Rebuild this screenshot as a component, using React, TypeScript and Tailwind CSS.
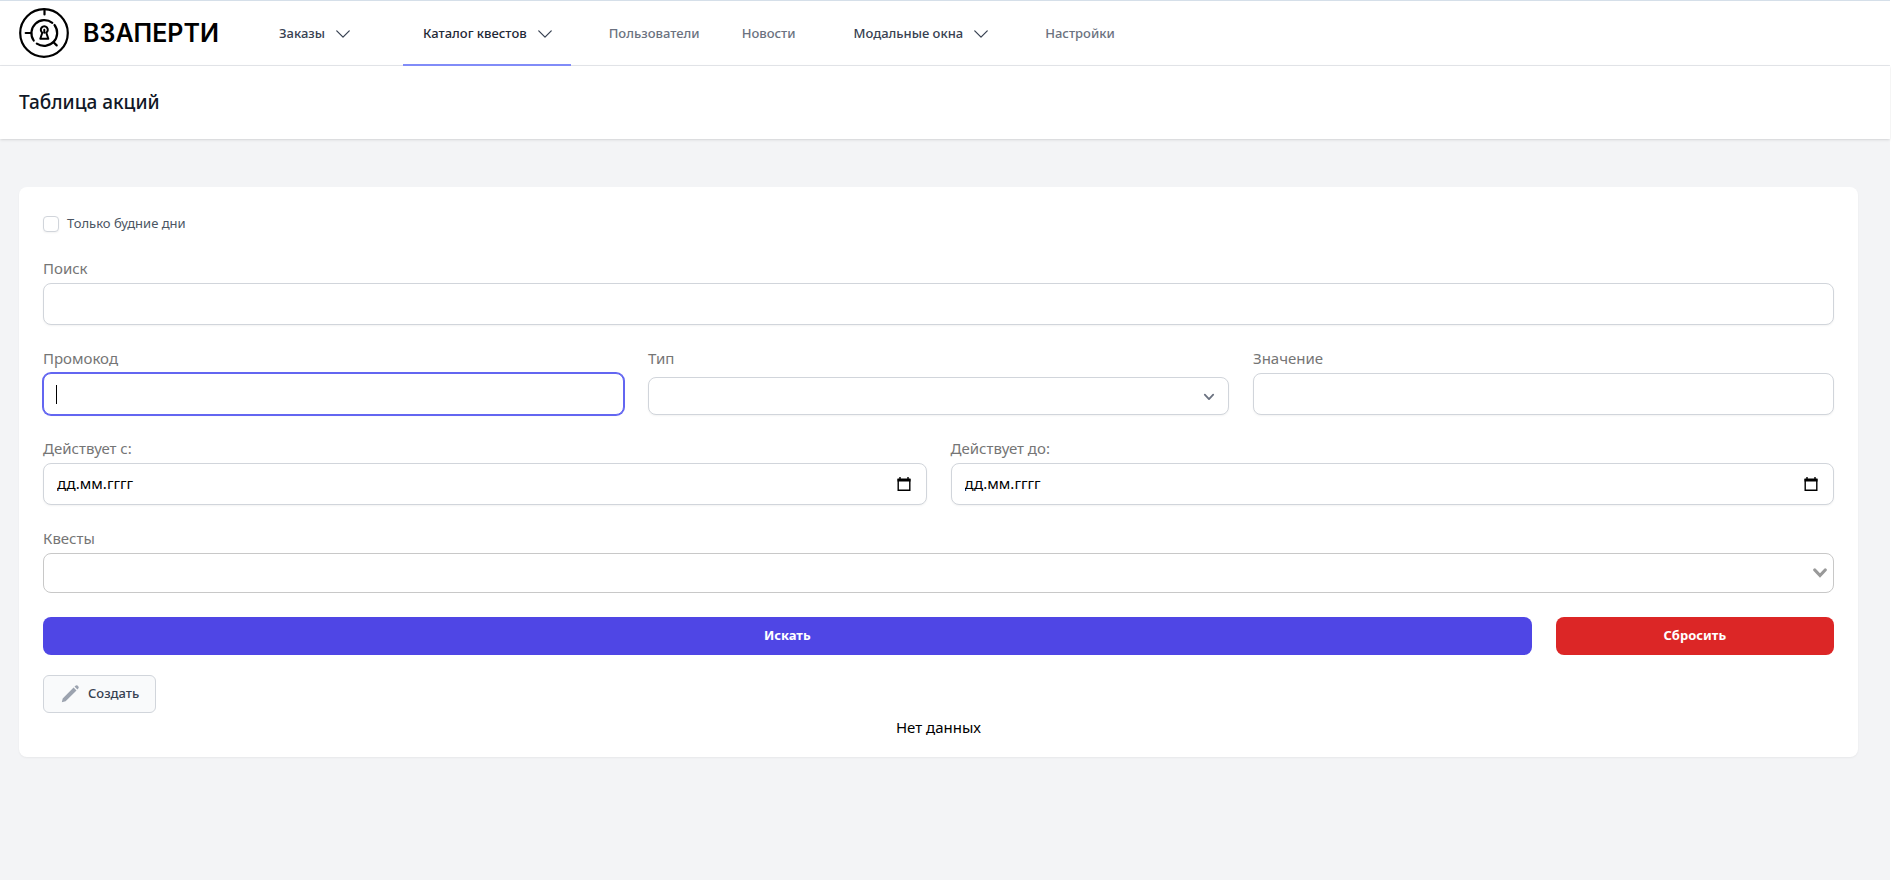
import { useState } from "react";
import type { ReactNode } from "react";

type NavItem = { name: string; dropdown?: boolean; current?: boolean };

const navigation: NavItem[] = [
  { name: "Заказы", dropdown: true },
  { name: "Каталог квестов", dropdown: true, current: true },
  { name: "Пользователи" },
  { name: "Новости" },
  { name: "Модальные окна", dropdown: true },
  { name: "Настройки" },
];

const inputClass =
  "block h-[42px] w-full rounded-lg border border-[#d1d5db] bg-white px-[13px] pb-0.5 text-[15px] text-black shadow-xs outline-none placeholder:text-black focus:border-[#6366f1] focus:ring-1 focus:ring-[#6366f1]";

function Logo() {
  return (
    <a href="#" className="flex items-center gap-3.5 text-black">
      <svg className="size-[50px]" viewBox="0 0 50 50" fill="none" stroke="currentColor" strokeWidth="2.200" strokeLinecap="round">
        <circle cx="25" cy="25" r="23.800" />
        <path d="M25.500 1.500v5M6.700 25h5M34.500 34.200l3.200 3.200" />
        <path d="M33.300 14.800A13 13 0 0 0 14.700 32.500M35.500 17A13 13 0 0 1 17.800 35.600" />
        <path d="M23.300 24.700a3.500 3.500 0 1 1 4 0l2 6h-8zM25.300 21.700v3" strokeLinejoin="round" strokeWidth="2" />
      </svg>
      <span className="pt-0.5 font-[Inter,sans-serif] text-[25px] font-semibold">ВЗАПЕРТИ</span>
    </a>
  );
}

function Nav() {
  return (
    <nav className="flex h-[66px] items-stretch border-t border-b border-t-[#d5dfe9] border-b-[#e5e7eb] bg-white pl-[19px]">
      <Logo />
      <div className="ml-10 flex gap-[34px] text-[13px] font-medium">
        {navigation.map((item) =>
          item.dropdown ? (
            <button
              key={item.name}
              type="button"
              className={`-mb-px flex items-center border-b-2 pt-0.5 pr-4 pl-5 ${
                item.current ? "border-[#818cf8] text-[#1f2937]" : "border-transparent text-[#374151]"
              }`}
            >
              {item.name}
              <svg className="ml-2 size-5 text-[#374151]" viewBox="0 0 24 24" fill="none" stroke="currentColor" strokeWidth="1.500">
                <path d="M19.500 8.250l-7.500 7.500-7.500-7.500" strokeLinecap="round" strokeLinejoin="round" />
              </svg>
            </button>
          ) : (
            <a key={item.name} href="#" className="-mb-px flex items-center border-b-2 border-transparent px-1 pt-0.5 text-[#6b7280]">
              {item.name}
            </a>
          )
        )}
      </div>
    </nav>
  );
}

function Field({ id, label, children }: { id: string; label: string; children: ReactNode }) {
  return (
    <div>
      <label htmlFor={id} className="mb-1.5 block text-[15px] leading-[18px] text-[#757575]">
        {label}
      </label>
      {children}
    </div>
  );
}

function DateInput({ id }: { id: string }) {
  return (
    <div className="relative">
      <input id={id} type="text" placeholder="дд.мм.гггг" className={inputClass} />
      <button type="button" aria-label="Выбрать дату" className="absolute inset-y-0 right-[15px] flex items-center">
        <svg className="size-4" viewBox="0 0 16 16" fill="none" stroke="black">
          <path d="M2.200 3v11.300h11.600V3" strokeWidth="1.400" />
          <path d="M1.500 4h13" strokeWidth="3" />
          <path d="M4 1v2M12 1v2" strokeWidth="1.400" />
        </svg>
      </button>
    </div>
  );
}

export default function App() {
  const [weekdays, setWeekdays] = useState(false);
  const [promo, setPromo] = useState("");

  return (
    <div className="min-h-screen border-r border-white bg-[#f3f4f6] font-['Noto_Sans',sans-serif]">
      <Nav />
      <header className="flex h-[73px] items-center bg-white px-[19px] shadow-sm">
        <h1 className="text-[19px] font-medium text-[#111827]">Таблица акций</h1>
      </header>

      <main className="pt-12 pr-8 pl-[19px]">
        <form className="rounded-lg bg-white px-6 pt-6 pb-[18px] shadow-xs" onSubmit={(e) => e.preventDefault()}>
          <div className="grid gap-6">
            <label className="flex h-6 items-center gap-2 pt-0.5 text-[13px] text-[#4b5563]">
              <input
                type="checkbox"
                checked={weekdays}
                onChange={(e) => setWeekdays(e.target.checked)}
                className="size-4 appearance-none rounded border border-[#d1d5db] bg-white shadow-xs checked:bg-[#4f46e5]"
              />
              Только будние дни
            </label>

            <Field id="search" label="Поиск">
              <input id="search" type="text" className={inputClass} />
            </Field>

            <div className="grid grid-cols-3 gap-6">
              <Field id="promo" label="Промокод">
                <div className="relative">
                  <input
                    id="promo"
                    type="text"
                    autoFocus
                    value={promo}
                    onChange={(e) => setPromo(e.target.value)}
                    className={`peer ${promo === "" ? "caret-transparent" : "caret-black"} ${inputClass}`}
                  />
                  {promo === "" && <span className="pointer-events-none absolute top-3 left-[13px] hidden h-[19px] w-px bg-black peer-focus:block" />}
                </div>
              </Field>
              <Field id="type" label="Тип">
                <div className="relative mt-2.5">
                  <select id="type" className="block h-[38px] w-full appearance-none rounded-lg border border-[#d1d5db] bg-white pr-10 pl-3 text-[13px] shadow-xs outline-none">
                    <option value=""></option>
                  </select>
                  <svg className="pointer-events-none absolute top-2 right-2 size-6 text-[#6b7280]" viewBox="0 0 20 20" fill="none" stroke="currentColor" strokeWidth="1.500">
                    <path d="M6.500 8L10 11.700 13.500 8" strokeLinecap="round" strokeLinejoin="round" />
                  </svg>
                </div>
              </Field>
              <Field id="value" label="Значение">
                <input id="value" type="text" className={inputClass} />
              </Field>
            </div>

            <div className="grid grid-cols-2 gap-6">
              <Field id="from" label="Действует с:">
                <DateInput id="from" />
              </Field>
              <Field id="to" label="Действует до:">
                <DateInput id="to" />
              </Field>
            </div>

            <Field id="quests" label="Квесты">
              <div className="relative">
                <select id="quests" className="block h-10 w-full appearance-none rounded-lg border border-[#c8c8c8] bg-white px-3 outline-none">
                  <option value=""></option>
                </select>
                <svg className="pointer-events-none absolute top-[15px] right-[7px] h-2.5 w-3.5 text-[#999]" viewBox="0 0 14 10" fill="none" stroke="currentColor" strokeWidth="3.200">
                  <path d="M1.800 2L7 7.500 12.200 2" strokeLinecap="round" />
                </svg>
              </div>
            </Field>

            <div className="grid grid-cols-6 gap-6 text-[13px] font-bold text-white">
              <button type="submit" className="col-span-5 h-[38px] rounded-lg bg-[#4f46e5]">
                Искать
              </button>
              <button type="reset" className="h-[38px] rounded-lg bg-[#dc2626]">
                Сбросить
              </button>
            </div>
          </div>

          <button type="button" className="mt-5 flex h-[38px] items-center gap-2 rounded-md border border-[#d1d5db] bg-[#f9fafb] px-4 text-[13px] font-medium text-[#374151]">
            <svg className="size-5 text-[#9ca3af]" viewBox="0 0 20 20" fill="currentColor">
              <path d="M2.700 14.400L13.600 3.500l2.900 2.900L5.600 17.300l-3.800.900zM14.500 2.600l.700-.700a2 2 0 0 1 2.900 2.900l-.700.700z" />
            </svg>
            Создать
          </button>
          <p className="mt-0.5 text-center text-[15px] leading-6 text-black">Нет данных</p>
        </form>
      </main>
    </div>
  );
}
